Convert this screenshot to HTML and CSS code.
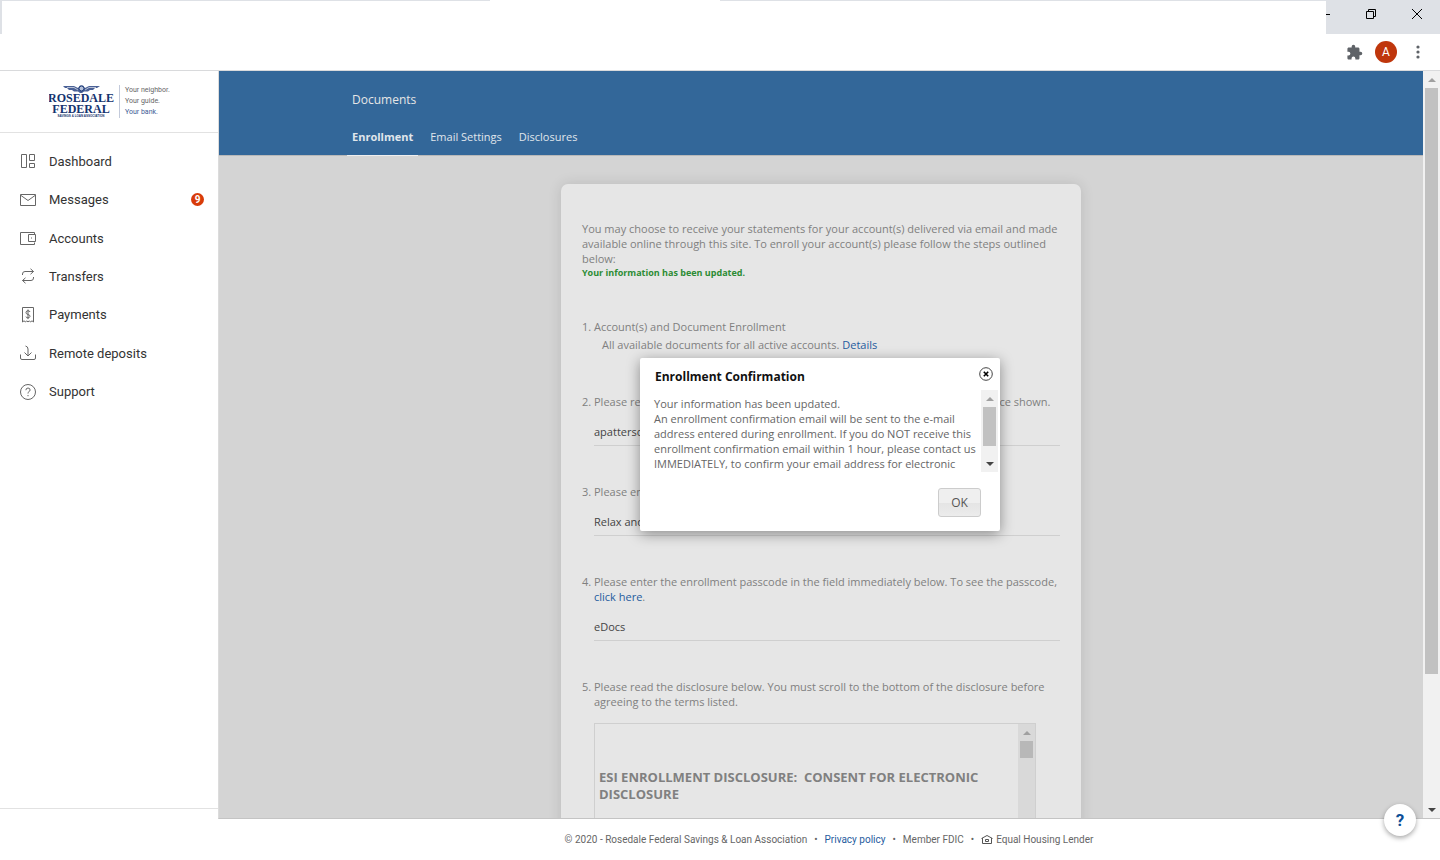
FILE: index.html
```html
<!DOCTYPE html>
<html lang="en">
<head>
<meta charset="utf-8">
<title>Documents - Rosedale Federal</title>
<link rel="stylesheet" href="styles.css">
</head>
<body>
<header class="browser">
  <div class="titlebar">
    <div class="tabstrip"></div>
    <div class="window-controls">
      <button class="win-btn win-min" aria-label="Minimize"><svg width="5" height="12" viewBox="0 0 5 12"><path d="M0 6.500h4" stroke="#000"/></svg></button>
      <button class="win-btn" aria-label="Restore"><svg width="12" height="12" viewBox="0 0 12 12" fill="none" stroke="#000"><path d="M1.500 3.500h7v7h-7zM3.500 3.500v-2h7v7h-2"/></svg></button>
      <button class="win-btn" aria-label="Close"><svg width="12" height="12" viewBox="0 0 12 12" stroke="#000"><path d="M1 1l10 10M11 1L1 11"/></svg></button>
    </div>
  </div>
  <div class="toolbar">
    <button class="tool-btn" aria-label="Extensions"><svg width="17" height="17" viewBox="0 0 24 24" fill="#5f6368"><path d="M20.500 11H19V7c0-1.100-.9-2-2-2h-4V3.500a2.500 2.500 0 0 0-5 0V5H4c-1.100 0-2 .9-2 2v3.800h1.500a2.700 2.700 0 0 1 0 5.400H2V20c0 1.100.9 2 2 2h3.800v-1.500a2.700 2.700 0 0 1 5.400 0V22H17c1.100 0 2-.9 2-2v-4h1.500a2.500 2.500 0 0 0 0-5z"/></svg></button>
    <button class="avatar" aria-label="Profile">A</button>
    <button class="tool-btn" aria-label="Menu"><svg width="4" height="16" viewBox="0 0 4 16" fill="#5f6368"><circle cx="2" cy="3" r="1.600"/><circle cx="2" cy="8" r="1.600"/><circle cx="2" cy="13" r="1.600"/></svg></button>
  </div>
</header>

<div class="app">
  <aside class="sidebar">
    <a class="brand" href="#">
      <svg class="brand-mark" width="66" height="36" viewBox="0 0 66 36" role="img" aria-label="Rosedale Federal Savings and Loan Association">
        <path fill="#4a6196" d="M14 2h11l4 2 2-2.500h3l2 2.500 4-2h11l-3 2h-2l-2 2h-3l-2 1.500h-4L33 9h-2l-2-1.500h-4L23 6h-3l-2-2h-2z"/>
        <path fill="none" stroke="#fff" d="M18 3.500h7l4 2.500M47 3.500h-7l-4 2.500" stroke-width=".6"/>
        <circle cx="32.500" cy="4.500" r="2.500" fill="#b4c0d8" stroke="#1c3a78"/>
        <text class="mark-name" x="32" y="18" text-anchor="middle">ROSEDALE</text>
        <text class="mark-name" x="32" y="29" text-anchor="middle">FEDERAL</text>
        <text class="mark-small" x="32" y="33" text-anchor="middle">SAVINGS &amp; LOAN ASSOCIATION</text>
      </svg>
      <span class="tagline"><span>Your neighbor.</span><span>Your guide.</span><span class="tag-blue">Your bank.</span></span>
    </a>
    <nav class="menu">
      <a class="menu-item" href="#"><svg class="icon" viewBox="0 0 16 16"><path d="M1.500 1.500h5v13h-5zM9.500 1.500h5v6h-5zM9.500 10.500h5v4h-5z"/></svg>Dashboard</a>
      <a class="menu-item" href="#"><svg class="icon" viewBox="0 0 16 16"><path d="M.5 2.500h15v11H.5zM1 3.500l7 5 7-5"/></svg>Messages<span class="badge">9</span></a>
      <a class="menu-item" href="#"><svg class="icon" viewBox="0 0 16 16"><path d="M14.500 4.500v-2H.5v12h14v-2M8.500 4.500h7v7h-7z"/><path d="M11 8h1"/></svg>Accounts</a>
      <a class="menu-item" href="#"><svg class="icon" viewBox="0 0 16 16"><path d="M2.500 7V6q0-2.500 2.500-2.500h8.500M10.500.8l3 2.700-3 2.700M13.500 9v1q0 2.500-2.500 2.500H2.500M5.500 9.800l-3 2.700 3 2.700"/></svg>Transfers</a>
      <a class="menu-item" href="#"><svg class="icon" viewBox="0 0 16 16"><path d="M2.500 15V.5h11V15l-1.500-1.200-1.500 1.200L9.300 13.800 8 15l-1.300-1.200L5.500 15 4 13.800zM10 5q-.3-1.300-2-1.300T6 5.300 8 7.500t2 1.900-2 1.500-2-1.300M8 2.500v9.600"/></svg>Payments</a>
      <a class="menu-item" href="#"><svg class="icon" viewBox="0 0 16 16"><path d="M.5 9.500V13q0 1.500 1.500 1.500h12q1.500 0 1.500-1.500V9.500M5.500 1Q8 1.500 8 4v7M4.500 7.500L8 11l3.500-3.500"/></svg>Remote deposits</a>
      <a class="menu-item" href="#"><svg class="icon" viewBox="0 0 16 16"><circle cx="8" cy="8" r="7.500"/><path d="M5.900 6.200q0-2.200 2.100-2.200t2.100 2q0 1-1.200 1.700T8 9.500M8 11v1.200"/></svg>Support</a>
    </nav>
    <div class="sidebar-end"></div>
  </aside>

  <main class="main">
    <div class="viewport">
      <div class="page">
        <div class="page-header">
          <div class="page-header-inner">
            <h1 class="page-title">Documents</h1>
            <nav class="tabs">
              <a class="tab tab-active" href="#">Enrollment</a>
              <a class="tab" href="#">Email Settings</a>
              <a class="tab" href="#">Disclosures</a>
            </nav>
          </div>
        </div>
        <form class="card">
          <p class="intro">You may choose to receive your statements for your account(s) delivered via email and made available online through this site. To enroll your account(s) please follow the steps outlined below:</p>
          <p class="success">Your information has been updated.</p>
          <ol class="steps">
            <li class="step"><span class="num">1.</span><div class="step-body">Account(s) and Document Enrollment
              <p class="details">All available documents for all active accounts. <a href="#">Details</a></p></div></li>
            <li class="step"><span class="num">2.</span><div class="step-body"><label for="email">Please review your e-mail address below. If incorrect, type a new one in the space shown.</label>
              <input class="field" id="email" type="text" value="apatterson"></div></li>
            <li class="step"><span class="num">3.</span><div class="step-body"><label for="phrase">Please enter an e-mail phrase. For more information about it, please <a href="#">click here.</a></label>
              <input class="field" id="phrase" type="text" value="Relax and"></div></li>
            <li class="step"><span class="num">4.</span><div class="step-body"><label for="passcode">Please enter the enrollment passcode in the field immediately below. To see the passcode, <a href="#">click here</a>.</label>
              <input class="field" id="passcode" type="text" value="eDocs"></div></li>
            <li class="step"><span class="num">5.</span><div class="step-body">Please read the disclosure below. You must scroll to the bottom of the disclosure before agreeing to the terms listed.
              <div class="disclosure">
                <h2 class="disclosure-title">ESI ENROLLMENT DISCLOSURE:&nbsp; CONSENT FOR ELECTRONIC DISCLOSURE</h2>
                <div class="scrollbar scrollbar-dim"><span class="arrow arrow-up"></span><span class="thumb thumb-short"></span></div>
              </div></div></li>
          </ol>
        </form>
        <div class="overlay">
          <section class="dialog" role="dialog" aria-labelledby="dialog-title">
            <div class="dialog-head">
              <h2 class="dialog-title" id="dialog-title">Enrollment Confirmation</h2>
              <button class="dialog-close" aria-label="Close"><svg width="14" height="14" viewBox="0 0 14 14" fill="none"><circle cx="7" cy="7" r="6.300" stroke="#444"/><path d="M4.800 4.800l4.400 4.400M9.200 4.800L4.800 9.200" stroke="#000" stroke-width="1.600"/></svg></button>
            </div>
            <div class="dialog-body">
              <p class="dialog-text">Your information has been updated.<br>An enrollment confirmation email will be sent to the e-mail address entered during enrollment. If you do NOT receive this enrollment confirmation email within 1 hour, please contact us IMMEDIATELY, to confirm your email address for electronic</p>
              <div class="scrollbar"><span class="arrow arrow-up"></span><span class="thumb thumb-medium"></span><span class="arrow arrow-down"></span></div>
            </div>
            <div class="dialog-actions"><button class="ok">OK</button></div>
          </section>
        </div>
      </div>
      <div class="scrollbar"><span class="arrow arrow-up"></span><span class="thumb thumb-page"></span><span class="arrow arrow-down"></span></div>
    </div>
    <footer class="footer">
      <span>© 2020 - Rosedale Federal Savings &amp; Loan Association</span><span class="dot">•</span>
      <a href="#">Privacy policy</a><span class="dot">•</span>
      <span>Member FDIC</span><span class="dot">•</span>
      <span class="lender"><svg width="12" height="9" viewBox="0 0 12 9" fill="none" stroke="#555"><path d="M.5 3.500L6 .5l5.500 3M1.500 3v5.500h9V3M4.500 4.500h3v2h-3z"/></svg>Equal Housing Lender</span>
    </footer>
  </main>
</div>
<button class="help" aria-label="Help">?</button>
</body>
</html>
```
FILE: styles.css
```css
* { box-sizing: border-box; }
body {
  margin: 0;
  height: 100vh;
  display: flex;
  flex-direction: column;
  background: #fff;
  font-family: "Open Sans", "Noto Sans", sans-serif;
  font-size: 11px;
  line-height: 15px;
  color: #808080;
  overflow: hidden;
}
a { color: #1f5c9e; text-decoration: none; }
p, h1, h2, ol { margin: 0; padding: 0; }
button { font: inherit; border: 0; padding: 0; background: none; }
svg { display: block; flex: none; }

/* Browser frame */
.browser { flex: none; border-bottom: 1px solid #d9dadc; }
.titlebar { display: flex; height: 34px; padding-left: 2px; background: #dee1e6; position: relative; }
.titlebar::before {
  content: "";
  position: absolute;
  top: 0;
  left: 34%;
  width: 16%;
  height: 2px;
  background: #fff;
}
.tabstrip { flex: 1; margin-top: 1px; background: #fff; }
.window-controls { display: flex; align-items: center; height: 28px; width: 114px; }
.win-btn { flex: 1; display: flex; justify-content: center; }
.win-min { flex: none; width: 22px; justify-content: flex-start; }
.toolbar { display: flex; justify-content: flex-end; align-items: center; gap: 12px; height: 36px; padding-right: 20px; }
.avatar { width: 22px; height: 22px; margin-right: 7px; border-radius: 50%; background: #bf360c; color: #fff; font-family: Roboto, sans-serif; font-size: 12px; line-height: 22px; text-align: center; }

/* Shell */
.app { flex: 1; min-height: 0; display: flex; }
.sidebar { width: 218px; flex: none; display: flex; flex-direction: column; font-family: Roboto, sans-serif; }
.brand { display: flex; align-items: center; height: 62px; padding-left: 49px; gap: 4px; border-bottom: 1px solid #e2e2e2; }
.mark-name { font: bold 12px "Liberation Serif", serif; fill: #14336f; }
.mark-small { font: bold 3px "Liberation Sans", sans-serif; fill: #14336f; }
.tagline { display: flex; flex-direction: column; padding-left: 5px; border-left: 1px solid #c3cadb; font-size: 7px; line-height: 11px; color: #666; }
.tag-blue { color: #3d5c94; }
.menu { display: flex; flex-direction: column; height: 269px; margin-top: 9px; }
.menu-item { flex: 1; display: flex; align-items: center; gap: 13px; padding: 0 14px 0 20px; font-size: 13px; color: #333; }
.icon { width: 16px; height: 16px; fill: none; stroke: #666; }
.badge { width: 13px; height: 13px; margin-left: auto; border-radius: 50%; background: #d83b0a; color: #fff; font-size: 10px; font-weight: bold; line-height: 13px; text-align: center; }
.sidebar-end { height: 52px; margin-top: auto; border-top: 1px solid #e2e2e2; }
.main { flex: 1; min-width: 0; display: flex; flex-direction: column; }
.viewport { flex: 1; min-height: 0; display: flex; border-left: 1px solid #dcdcdc; border-bottom: 1px solid #c4c4c4; }
.page { flex: 1; min-width: 0; position: relative; overflow: hidden; background: #d4d4d4; }

/* Page header */
.page-header { padding-top: 20px; background: #336799; border-bottom: 1px solid #b8b8b8; }
.page-header-inner { max-width: 948px; margin: 0 auto; padding: 0 5px; }
.page-title { font-size: 12px; font-weight: normal; line-height: 18px; color: #e6e6e6; }
.tabs { display: flex; gap: 7px; height: 47px; margin: 0 -5px -1px; padding-top: 20px; }
.tab { padding: 0 5px; height: 27px; color: #e0e6ec; }
.tab-active { font-weight: bold; border-bottom: 1px solid #eee; }

/* Enrollment card */
.card { width: 520px; max-width: 100%; margin: 28px auto 0; padding: 37px 21px; border-radius: 7px; background: #e6e6e6; box-shadow: 0 0 14px rgba(0, 0, 0, .12); }
.success { font-size: 9px; font-weight: bold; line-height: 13px; color: #2c8c34; }
.steps { list-style: none; margin-top: 40px; }
.step { display: flex; margin-bottom: 38px; }
.num { flex: none; width: 12px; }
.step-body { flex: 1; min-width: 0; }
.step-body label { display: block; }
.details { padding: 3px 8px 4px; }
.field { display: block; width: 100%; height: 26px; margin-top: 11px; padding: 0 0 2px; border: 0; border-bottom: 1px solid #cfcfcf; background: none; color: #444; font: inherit; }
.disclosure { display: flex; width: 442px; max-width: 100%; height: 260px; margin-top: 14px; border: 1px solid #cfcfcf; }
.disclosure-title { flex: 1; padding: 45px 4px 0; font-size: 13px; line-height: 17px; color: #808080; }

/* Scrollbars */
.scrollbar { flex: none; display: flex; flex-direction: column; width: 17px; padding: 0 2px; background: #f1f1f1; }
.scrollbar-dim { background: #d9d9d9; }
.arrow { flex: none; height: 17px; display: flex; align-items: center; justify-content: center; }
.arrow::before { content: ""; border: 4px solid transparent; }
.arrow-up::before { border-top: 0; border-bottom-color: #a0a0a0; }
.arrow-down { margin-top: auto; }
.arrow-down::before { border-bottom: 0; border-top-color: #444; }
.thumb { background: #c1c1c1; }
.scrollbar-dim .thumb { background: #b8b8b8; }
.thumb-short { height: 17px; }
.thumb-medium { height: 39px; }
.thumb-page { height: 80%; max-height: 586px; }

/* Dialog */
.overlay { position: absolute; inset: 0; display: grid; place-items: center; padding-right: 2px; }
.dialog { width: 360px; padding-bottom: 14px; background: #fff; border-radius: 2px; box-shadow: 0 3px 14px rgba(0, 0, 0, .4); color: #666; }
.dialog-head { display: flex; justify-content: space-between; align-items: center; height: 32px; padding: 4px 7px 0 15px; }
.dialog-title { font-size: 12px; color: #111; }
.dialog-close { padding-bottom: 4px; }
.dialog-body { display: flex; height: 82px; margin-right: 2px; }
.dialog-text { flex: 1; padding: 6px 0 0 14px; overflow: hidden; }
.dialog-actions { display: flex; justify-content: flex-end; padding: 16px 19px 0; }
.ok { width: 43px; height: 29px; border: 1px solid #ccc; border-radius: 3px; background: linear-gradient(#efefef 50%, #e4e4e4 50%, #ececec); color: #555; font-size: 12px; }

/* Footer */
.footer { flex: none; display: flex; justify-content: center; align-items: center; gap: 7px; height: 41px; font-family: Roboto, sans-serif; font-size: 10px; color: #666; }
.lender { display: flex; align-items: center; gap: 3px; }
.help { position: absolute; right: 24px; bottom: 24px; width: 32px; height: 32px; border-radius: 50%; background: #fff; box-shadow: 0 2px 5px rgba(0, 0, 0, .35); color: #0d4f97; font-family: Roboto, sans-serif; font-size: 17px; font-weight: bold; }
```
